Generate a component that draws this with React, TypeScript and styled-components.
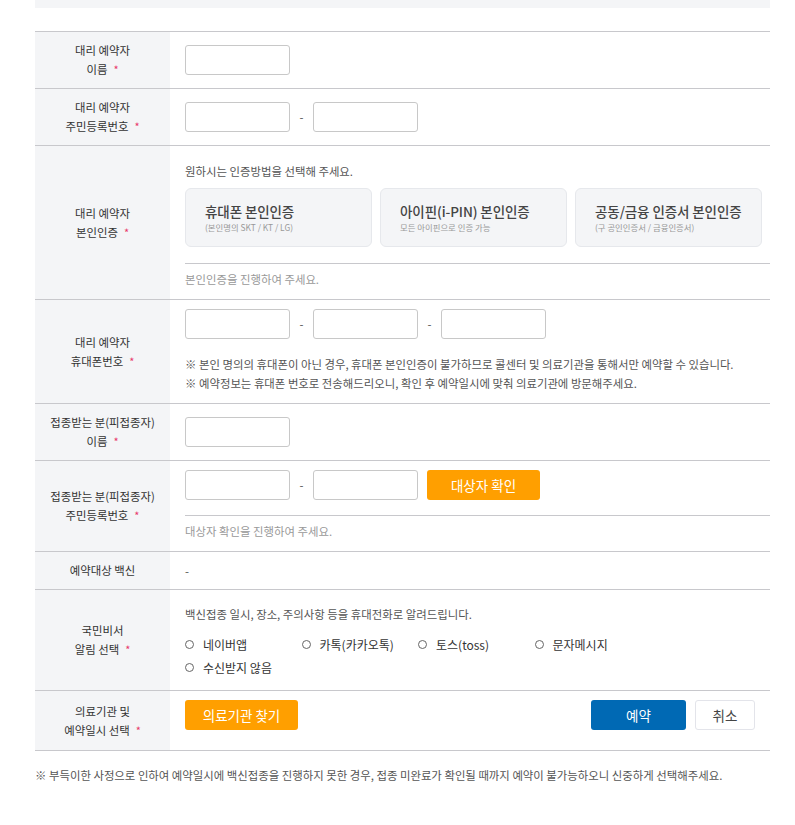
import React from 'react'
import styled, { createGlobalStyle } from 'styled-components'

const GlobalStyle = createGlobalStyle`
    body {
        margin: 0;
        background: #fff;
        font-family: "Noto Sans CJK KR", "Noto Sans", sans-serif;
        font-size: 11.4px;
        color: #333;
    }
    * { box-sizing: border-box; }
`

const Page = styled.div`
    width: 735px;
    margin-left: 35px;
`

const TopBar = styled.div`
    height: 8px;
    background: #f4f5f7;
    margin-bottom: 23px;
`

const Table = styled.div`
    border-top: 1px solid #c8c8cc;
`

const Row = styled.div`
    display: flex;
    border-bottom: 1px solid #c8c8cc;
`

const Label = styled.div`
    width: 135px;
    flex-shrink: 0;
    background: #f4f5f7;
    display: flex;
    align-items: center;
    justify-content: center;
    text-align: center;
    line-height: 19px;
    color: #333;
`

const Star = styled.span`
    color: #e8386a;
    font-size: 11px;
    margin-left: 6px;
`

const Cell = styled.div<{ $pt?: number; $pb?: number }>`
    flex: 1;
    padding: ${p => p.$pt ?? 13}px 0 ${p => p.$pb ?? 13}px 15px;
    display: flex;
    flex-direction: column;
    align-items: flex-start;
`

const Line = styled.div`
    display: flex;
    align-items: center;
    height: 30px;
`

const Input = styled.input`
    width: 105px;
    height: 30px;
    border: 1px solid #c8c8c8;
    border-radius: 3px;
    outline: none;
    margin: 0;
    padding: 0 8px;
`

const Dash = styled.span`
    width: 23px;
    text-align: center;
    color: #555;
`

const Text = styled.div<{ $tone?: string; $mt?: number }>`
    line-height: 20px;
    color: ${p => p.$tone ?? '#555'};
    margin-top: ${p => p.$mt ?? 0}px;
`

const Cards = styled.div`
    display: grid;
    grid-template-columns: repeat(3, 187px);
    gap: 8px;
    margin-top: 7px;
`

const Card = styled.div`
    height: 59px;
    background: #f4f5f7;
    border: 1px solid #e6e8ec;
    border-radius: 6px;
    padding: 0 19px;
    display: flex;
    flex-direction: column;
    justify-content: center;
`

const CardTitle = styled.div`
    font-size: 13.5px;
    font-weight: 500;
    color: #444;
    letter-spacing: -0.1px;
    line-height: 20px;
`

const CardSub = styled.div`
    font-size: 8.4px;
    color: #999;
    line-height: 13px;
`

const Status = styled.div<{ $mt?: number }>`
    align-self: stretch;
    border-top: 1px solid #c8c8cc;
    margin-top: ${p => p.$mt ?? 16}px;
    padding-top: 5px;
    line-height: 20px;
    height: 26px;
    color: #999;
`

const Notes = styled.div`
    margin-top: 16px;
    line-height: 19px;
    color: #555;
`

const Button = styled.button<{ $bg: string }>`
    height: 30px;
    width: 113px;
    border: none;
    border-radius: 3px;
    background: ${p => p.$bg};
    color: #fff;
    font-family: inherit;
    font-size: 13.5px;
    padding: 0;
    margin-left: 9px;
`

const Radios = styled.div`
    display: grid;
    grid-template-columns: repeat(4, 116.5px);
    margin-top: 9px;
`

const RadioItem = styled.label`
    display: flex;
    align-items: center;
    line-height: 23px;
    font-size: 12px;
    color: #333;
`

const Circle = styled.span`
    width: 9px;
    height: 9px;
    border: 1px solid #666;
    border-radius: 50%;
    margin-right: 9px;
`

const Actions = styled.div`
    align-self: stretch;
    display: flex;
    align-items: center;
    height: 30px;
    padding-right: 15px;
`

const Spacer = styled.div`
    flex: 1;
`

const CancelButton = styled.button`
    height: 30px;
    width: 60px;
    border: 1px solid #e3e4ea;
    border-radius: 3px;
    background: #fff;
    color: #444;
    font-family: inherit;
    font-size: 13.5px;
    padding: 0;
    margin-left: 9px;
`

const Footer = styled.div`
    margin-top: 14px;
    line-height: 20px;
    color: #555;
`

const radios = ['네이버앱', '카톡(카카오톡)', '토스(toss)', '문자메시지', '수신받지 않음']

const App: React.FC = () => {
    return (
        <>
            <GlobalStyle />
            <Page>
                <TopBar />
                <Table>
                    <Row>
                        <Label><div>대리 예약자<br />이름<Star>*</Star></div></Label>
                        <Cell>
                            <Input />
                        </Cell>
                    </Row>
                    <Row>
                        <Label><div>대리 예약자<br />주민등록번호<Star>*</Star></div></Label>
                        <Cell>
                            <Line>
                                <Input />
                                <Dash>-</Dash>
                                <Input />
                            </Line>
                        </Cell>
                    </Row>
                    <Row>
                        <Label><div>대리 예약자<br />본인인증<Star>*</Star></div></Label>
                        <Cell $pt={9} $pb={10}>
                            <Text $mt={6}>원하시는 인증방법을 선택해 주세요.</Text>
                            <Cards>
                                <Card>
                                    <CardTitle>휴대폰 본인인증</CardTitle>
                                    <CardSub>(본인명의 SKT / KT / LG)</CardSub>
                                </Card>
                                <Card>
                                    <CardTitle>아이핀(i-PIN) 본인인증</CardTitle>
                                    <CardSub>모든 아이핀으로 인증 가능</CardSub>
                                </Card>
                                <Card>
                                    <CardTitle>공동/금융 인증서 본인인증</CardTitle>
                                    <CardSub>(구 공인인증서 / 금융인증서)</CardSub>
                                </Card>
                            </Cards>
                            <Status>본인인증을 진행하여 주세요.</Status>
                        </Cell>
                    </Row>
                    <Row>
                        <Label><div>대리 예약자<br />휴대폰번호<Star>*</Star></div></Label>
                        <Cell $pt={9} $pb={10}>
                            <Line>
                                <Input />
                                <Dash>-</Dash>
                                <Input />
                                <Dash>-</Dash>
                                <Input />
                            </Line>
                            <Notes>
                                ※ 본인 명의의 휴대폰이 아닌 경우, 휴대폰 본인인증이 불가하므로 콜센터 및 의료기관을 통해서만 예약할 수 있습니다.<br />
                                ※ 예약정보는 휴대폰 번호로 전송해드리오니, 확인 후 예약일시에 맞춰 의료기관에 방문해주세요.
                            </Notes>
                        </Cell>
                    </Row>
                    <Row>
                        <Label><div>접종받는 분(피접종자)<br />이름<Star>*</Star></div></Label>
                        <Cell>
                            <Input />
                        </Cell>
                    </Row>
                    <Row>
                        <Label><div>접종받는 분(피접종자)<br />주민등록번호<Star>*</Star></div></Label>
                        <Cell $pt={9} $pb={10}>
                            <Line>
                                <Input />
                                <Dash>-</Dash>
                                <Input />
                                <Button $bg="#ff9f00">대상자 확인</Button>
                            </Line>
                            <Status $mt={15}>대상자 확인을 진행하여 주세요.</Status>
                        </Cell>
                    </Row>
                    <Row>
                        <Label><div>예약대상 백신</div></Label>
                        <Cell $pt={9} $pb={8}>
                            <Text>-</Text>
                        </Cell>
                    </Row>
                    <Row>
                        <Label><div>국민비서<br />알림 선택<Star>*</Star></div></Label>
                        <Cell $pt={9} $pb={11}>
                            <Text $mt={5}>백신접종 일시, 장소, 주의사항 등을 휴대전화로 알려드립니다.</Text>
                            <Radios>
                                {radios.map(r => (
                                    <RadioItem key={r}><Circle />{r}</RadioItem>
                                ))}
                            </Radios>
                        </Cell>
                    </Row>
                    <Row>
                        <Label><div>의료기관 및<br />예약일시 선택<Star>*</Star></div></Label>
                        <Cell $pt={9} $pb={20}>
                            <Actions>
                                <Button $bg="#ff9f00" style={{ marginLeft: 0 }}>의료기관 찾기</Button>
                                <Spacer />
                                <Button $bg="#0069b4" style={{ width: 95 }}>예약</Button>
                                <CancelButton>취소</CancelButton>
                            </Actions>
                        </Cell>
                    </Row>
                </Table>
                <Footer>※ 부득이한 사정으로 인하여 예약일시에 백신접종을 진행하지 못한 경우, 접종 미완료가 확인될 때까지 예약이 불가능하오니 신중하게 선택해주세요.</Footer>
            </Page>
        </>
    )
}

export default App
